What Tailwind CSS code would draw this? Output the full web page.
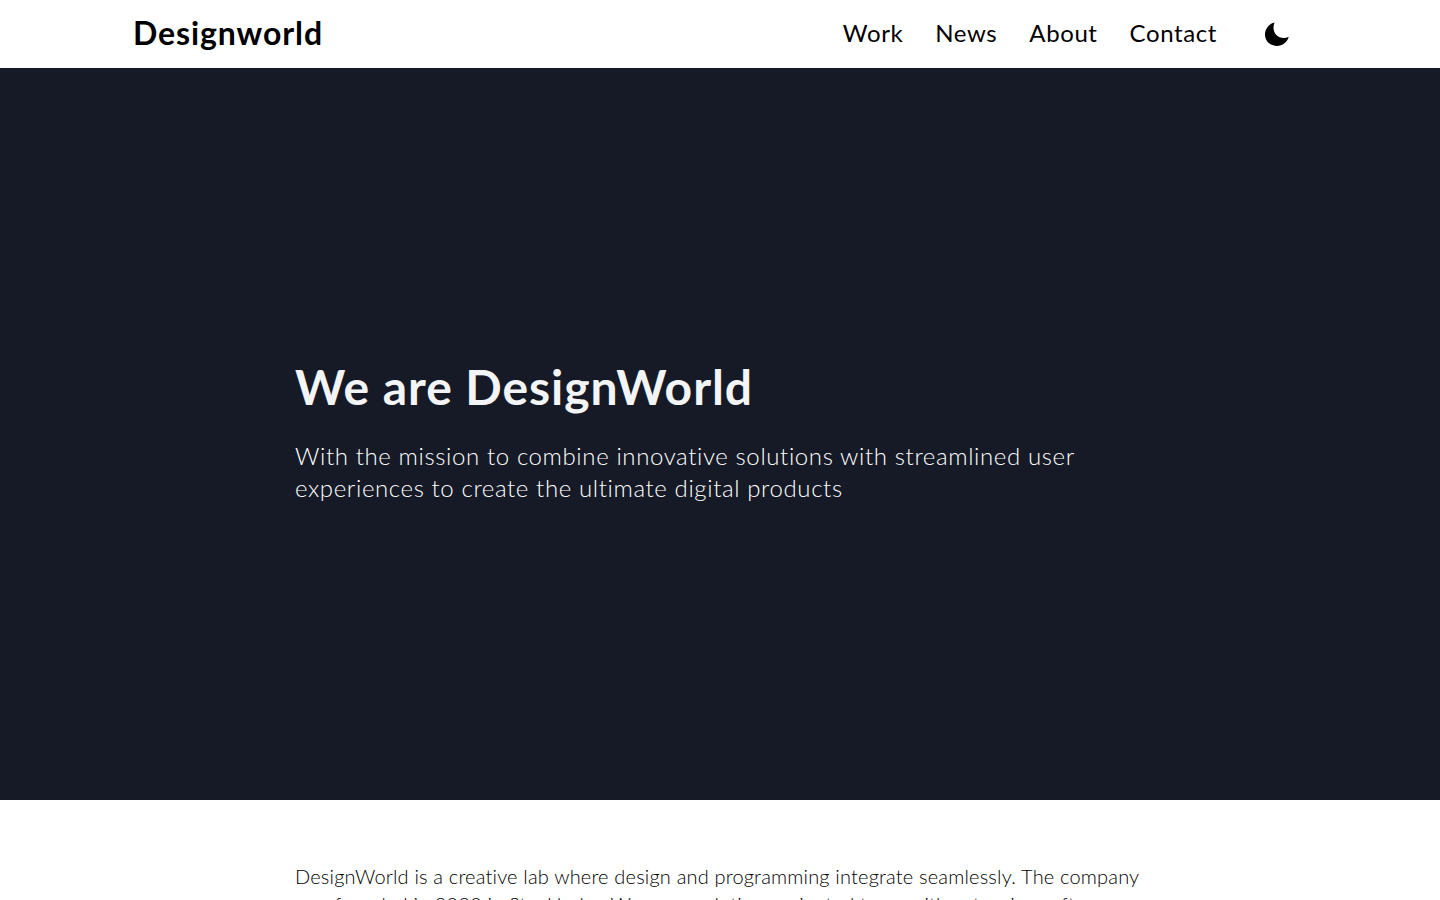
<!DOCTYPE html>
<html lang="en">
  <head>
    <meta charset="UTF-8" />
    <title>Designworld</title>
    <script src="https://cdn.jsdelivr.net/npm/@tailwindcss/browser@4"></script>
  </head>
  <body class="bg-white text-black font-['Lato',sans-serif] [font-variant-ligatures:none]">
    <!-- header -->
    <header class="h-[68px] flex items-center justify-between pb-0.5 pl-[133px] pr-[151px]">
      <a href="#" class="text-[32px] font-bold leading-none tracking-[0.9px]">Designworld</a>
      <nav class="flex items-center">
        <div class="flex gap-8 text-2xl tracking-[0.6px]">
          <a href="#">Work</a>
          <a href="#">News</a>
          <a href="#">About</a>
          <a href="#">Contact</a>
        </div>
        <button class="ml-12 w-6 h-6 mt-0.5">
          <svg viewBox="0 0 24 24" class="w-6 h-6" fill="currentColor">
            <path d="M9.5 0.6C4 1.800 0 6.700 0 12.400 0 19 5.400 24 12 24c5.600 0 10.400-3.900 11.700-9.200-1.500 0.800-3.200 1.200-5 1.200C12.900 16 8.500 11.500 8.500 5.700c0-1.800 0.400-3.600 1-5.100z" />
          </svg>
        </button>
      </nav>
    </header>

    <!-- hero -->
    <section class="h-[732px] bg-[#151a26] flex flex-col justify-center pb-0.5 pl-[295px] pr-[295px] text-[#f3f4f6]">
      <h1 class="text-5xl font-bold leading-none tracking-[0.95px]">We are DesignWorld</h1>
      <p class="mt-[29px] text-2xl leading-8 font-light text-white tracking-[0.61px]">With the mission to combine innovative solutions with streamlined user experiences to create the ultimate digital products</p>
    </section>

    <!-- about -->
    <section class="pt-[62px] pl-[295px] pr-[295px] pb-16">
      <p class="text-xl leading-7 font-light tracking-[0.18px]">DesignWorld is a creative lab where design and programming integrate seamlessly. The company was founded in 2020 in Stockholm. We are a solutions-oriented team with extensive software</p>
    </section>
  </body>
</html>
